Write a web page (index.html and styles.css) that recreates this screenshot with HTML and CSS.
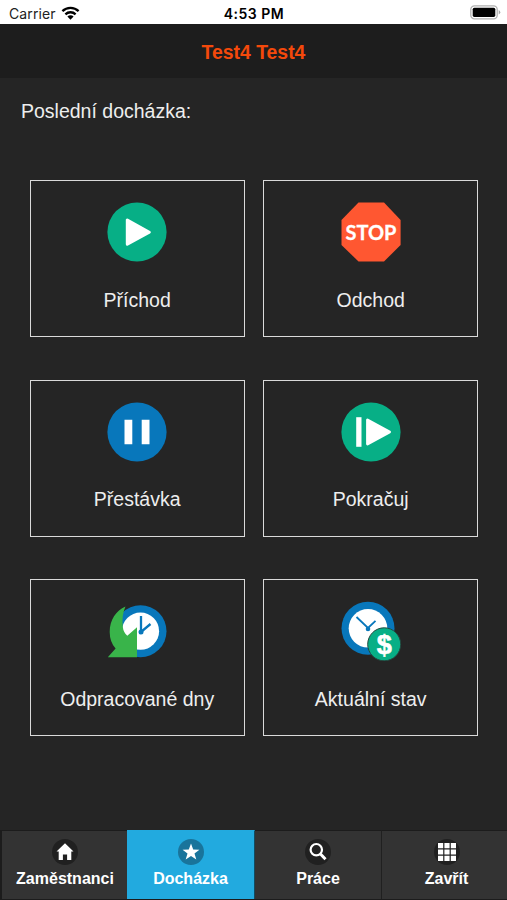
FILE: index.html
```html
<!DOCTYPE html>
<html lang="cs">
<head>
<meta charset="utf-8">
<meta name="viewport" content="width=device-width, initial-scale=1">
<title>Docházka</title>
<link rel="stylesheet" href="styles.css">
</head>
<body>
<div class="status">
  <div class="carrier">
    <span>Carrier</span>
    <svg class="wifi" width="19" height="14" viewBox="0 0 18 14"><g fill="none" stroke="#000" stroke-width="2.3"><path d="M.9 5.1a11.6 11.6 0 0 1 16.2 0"/><path d="M3.9 8.3a7.4 7.4 0 0 1 10.2 0"/></g><path d="M9 13.7 5.9 10.6a4.4 4.4 0 0 1 6.2 0z"/></svg>
  </div>
  <span class="time">4:53 PM</span>
  <svg class="battery" width="31" height="15" viewBox="0 0 31 15"><rect x=".8" y=".8" width="26.4" height="13" rx="3.6" fill="#fff" stroke="#b0b0b0" stroke-width="1.3"/><rect x="2.7" y="2.7" width="22.6" height="9.2" rx="1.6"/><path d="M28.7 5v4.6q1.6-.8 1.6-2.3T28.7 5z" fill="#a8a8a8"/></svg>
</div>
<header class="header">Test4 Test4</header>
<main class="content">
  <h2 class="last">Poslední docházka:</h2>
  <div class="grid">
    <a class="card">
      <svg class="icon" viewBox="0 0 60 60"><circle cx="30" cy="30" r="29.6" fill="#07af86"/><path d="M20.3 18v24.2L42.3 30.2z" fill="#fff" stroke="#fff" stroke-width="3" stroke-linejoin="round"/></svg>
      <span class="label">Příchod</span>
    </a>
    <a class="card">
      <svg class="icon" viewBox="0 0 60 60"><path d="M17.5.5H43L59.6 18v25L43 59.5H17.5L.5 43V18z" fill="#ff5731"/><text class="stop" x="30" y="37.5" text-anchor="middle" textLength="51" lengthAdjust="spacingAndGlyphs">STOP</text></svg>
      <span class="label">Odchod</span>
    </a>
    <a class="card">
      <svg class="icon" viewBox="0 0 60 60"><circle cx="30" cy="30" r="29.6" fill="#0877bb"/><path d="M17.5 17.7h7.8v24.6h-7.8zM34.7 17.7h7.8v24.6h-7.8z" fill="#fff"/></svg>
      <span class="label">Přestávka</span>
    </a>
    <a class="card">
      <svg class="icon" viewBox="0 0 60 60"><circle cx="30" cy="30" r="29.6" fill="#07af86"/><path d="M15.2 15.2h5.3v29.6h-5.3z" fill="#fff"/><path d="M26.5 17.9v24.2L48.6 30z" fill="#fff" stroke="#fff" stroke-width="2.8" stroke-linejoin="round"/></svg>
      <span class="label">Pokračuj</span>
    </a>
    <a class="card">
      <svg class="icon" viewBox="0 0 60 60"><circle cx="33.5" cy="30.2" r="26" fill="#0877bb"/><circle cx="33.5" cy="30.2" r="18.6" fill="#fff"/><path d="M34 15v16l9.5-8" fill="none" stroke="#0877bb" stroke-width="2.3"/><circle cx="34" cy="31" r="2.5" fill="#0877bb"/><path d="M18.5 5.5Q14.500 14 15.800 26q.7 5.500 4.500 8.800l9.700-8.500V56.300H.8L8.600 47.500Q2.700 41 2.700 31C2.700 19 9 9.500 18.500 5.500z" fill="#39b44a"/></svg>
      <span class="label">Odpracované dny</span>
    </a>
    <a class="card">
      <svg class="icon" viewBox="0 0 60 60"><circle cx="27" cy="27.3" r="26.5" fill="#0877bb"/><circle cx="27" cy="27.3" r="19.3" fill="#fff"/><path d="M15.5 16 27 27l7.5-7.2" fill="none" stroke="#0877bb" stroke-width="1.8"/><circle cx="27" cy="28" r="2.3" fill="#0877bb"/><circle cx="43.2" cy="43.3" r="16.5" fill="#07af86" stroke="#24483f" stroke-width="1"/><text class="dollar" x="43.2" y="52.8" text-anchor="middle">$</text></svg>
      <span class="label">Aktuální stav</span>
    </a>
  </div>
</main>
<nav class="tabs">
  <a class="tab">
    <svg class="tab-icon" viewBox="0 0 26 26"><circle cx="13" cy="13" r="13" fill="#202020"/><path d="M13 4.2 21.5 12.5h-2.2V21h-4.2v-5.5h-4.2V21H6.700v-8.500H4.500z" fill="#fff"/></svg>
    <span>Zaměstnanci</span>
  </a>
  <a class="tab active">
    <svg class="tab-icon" viewBox="0 0 26 26"><circle cx="13" cy="13" r="13" fill="#19749b"/><path d="m13 4.500 2.200 6 6.200.2-4.900 3.800 1.800 6.100-5.300-3.500-5.300 3.500 1.800-6.100-4.900-3.800 6.200-.2z" fill="#fff"/></svg>
    <span>Docházka</span>
  </a>
  <a class="tab">
    <svg class="tab-icon" viewBox="0 0 26 26"><circle cx="13" cy="13" r="13" fill="#202020"/><g fill="none" stroke="#fff"><circle cx="11.300" cy="10.700" r="5.700" stroke-width="2.200"/><path d="m15.500 15 5 5.200" stroke-width="3"/></g></svg>
    <span>Práce</span>
  </a>
  <a class="tab last-tab">
    <svg class="tab-icon" viewBox="0 0 26 26"><circle cx="13" cy="13" r="13" fill="#202020"/><g fill="#fff"><path d="M4 4h5.200v5.200H4zM10.400 4h5.200v5.200h-5.200zM16.800 4H22v5.200h-5.200zM4 10.400h5.200v5.200H4zM10.400 10.400h5.200v5.200h-5.200zM16.800 10.400H22v5.200h-5.200zM4 16.800h5.200V22H4zM10.400 16.800h5.200V22h-5.200zM16.800 16.800H22V22h-5.200z"/></g></svg>
    <span>Zavřít</span>
  </a>
</nav>
</body>
</html>
```
FILE: styles.css
```css
* { box-sizing: border-box; }
body {
  margin: 0;
  height: 900px;
  display: flex;
  flex-direction: column;
  overflow: hidden;
  background: #252525;
  color: #eee;
  font-family: "Liberation Sans", Arial, sans-serif;
}
.status {
  height: 24px;
  display: grid;
  grid-template-columns: 1fr auto 1fr;
  align-items: center;
  padding: 3px 6px 0 9px;
  background: #fff;
  color: #000;
  font: 14px/18px Inter, sans-serif;
}
.carrier { display: flex; align-items: center; gap: 5px; color: #222; letter-spacing: .1px; }
.wifi { margin-top: -2px; }
.time { font-weight: 600; letter-spacing: .5px; margin-right: 2px; }
.battery { justify-self: end; margin-top: -2px; }
.header {
  height: 54px;
  line-height: 56px;
  text-align: center;
  background: #1d1d1d;
  color: #f4490b;
  font-size: 19.4px;
  font-weight: 700;
}
.content { flex: 1; }
.last {
  margin: 20px 0 0 21px;
  height: 26px;
  font-size: 19.5px;
  line-height: 26px;
  font-weight: 400;
}
.grid {
  display: grid;
  grid-template-columns: 215px 215px;
  grid-auto-rows: 157px;
  column-gap: 18.5px;
  row-gap: 42.5px;
  margin: 56px 0 0 29.7px;
}
.card {
  display: flex;
  flex-direction: column;
  align-items: center;
  border: 1.5px solid #dadada;
  padding-top: 21px;
}
.icon { width: 60px; height: 60px; display: block; flex: none; }
.label { margin-top: 24.6px; font-size: 19.5px; line-height: 26px; white-space: nowrap; }
.stop { font: 700 21px Lato, sans-serif; fill: #fff; stroke: #fff; stroke-width: .3px; }
.dollar { font: 700 27px "Liberation Sans", sans-serif; fill: #fff; stroke: #fff; stroke-width: .6px; }
.tabs {
  height: 70px;
  display: grid;
  grid-template-columns: 125px 128px 127px 1fr;
  border-bottom: 1px solid #1c1c1c;
  border-left: 2px solid #1c1c1c;
}
.tab {
  display: flex;
  flex-direction: column;
  align-items: center;
  padding-top: 8px;
  background: #333;
  border-top: 1px solid #1c1c1c;
  border-right: 1px solid #202020;
  color: #fff;
  font-size: 16px;
  line-height: 20px;
  font-weight: 700;
}
.tab:first-child { border-right: 0; padding-left: 1px; }
.tab.active { background: #22aadf; border-top-color: #22aadf; border-right-color: #124c62; }
.last-tab { border-right: 0; padding-left: 4px; }
.tab-icon { width: 26px; height: 26px; margin-bottom: 4px; }
```
